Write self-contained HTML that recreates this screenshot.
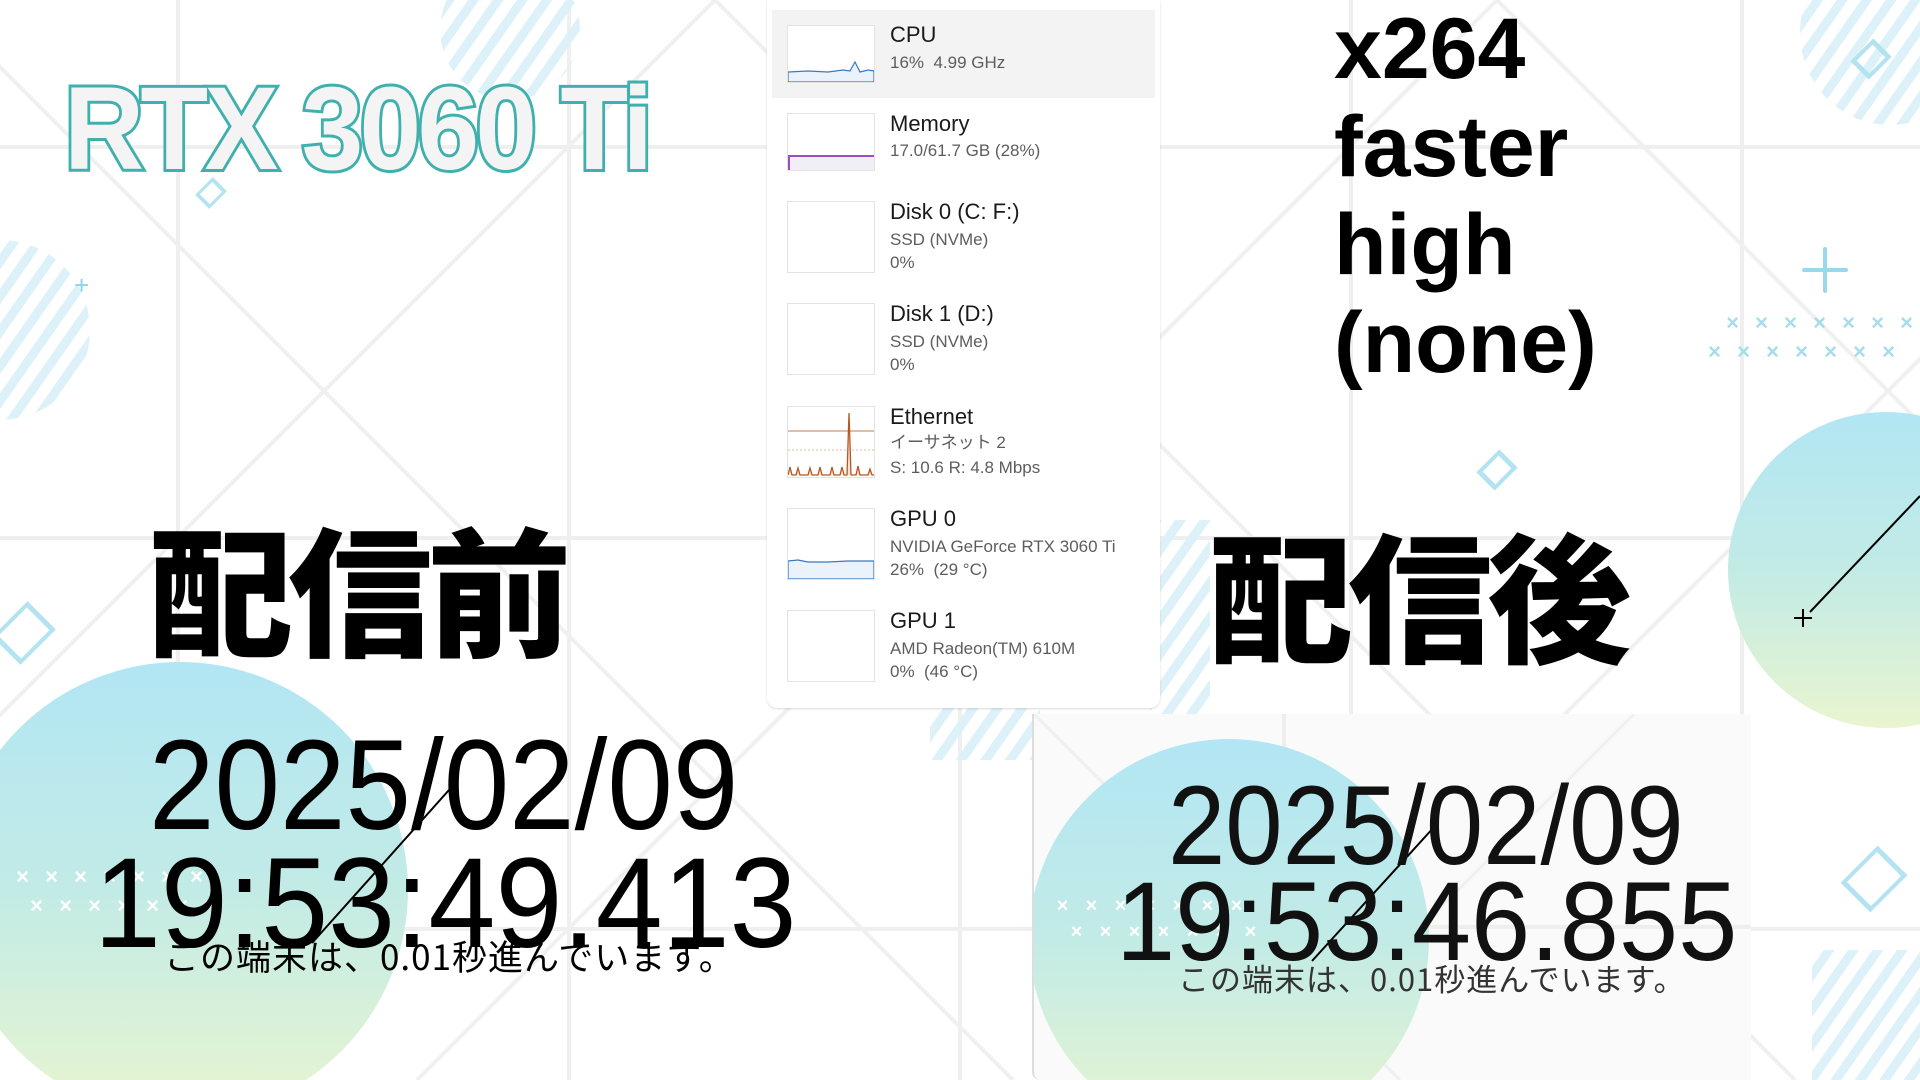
<!DOCTYPE html>
<html><head><meta charset="utf-8"><style>
*{margin:0;padding:0;box-sizing:border-box}
html,body{width:1920px;height:1080px;overflow:hidden;background:#fff}
#root{position:relative;width:1920px;height:1080px;overflow:hidden;font-family:"Liberation Sans","Noto Sans CJK JP",sans-serif}
.a{position:absolute}
.hatch{position:absolute;border-radius:50%;background:repeating-linear-gradient(-55deg,#dcf2f8 0 9px,transparent 9px 20px)}
.dia{position:absolute;border:4px solid #b3e3f0;transform:rotate(45deg) scaleY(1.25)}
.tm{position:absolute;left:767px;top:0;width:393px;height:708px;background:#fff;border-radius:0 0 10px 10px;box-shadow:0 1px 2px rgba(0,0,0,.15)}
.th{position:absolute;left:20px;width:88px;border:1px solid #e3e3e3;background:#fff}
.t1{position:absolute;left:123px;font-size:22px;color:#1a1a1a;white-space:nowrap}
.t2{position:absolute;left:123px;font-size:17px;color:#5d5d5d;white-space:nowrap}
.clk{position:absolute;white-space:nowrap;color:#000;transform-origin:0 0;line-height:1}
.big{position:absolute;font-family:"Noto Sans CJK JP",sans-serif;font-weight:900;font-size:140px;line-height:1;color:#000;letter-spacing:-5px;transform-origin:0 0}
.x264{position:absolute;left:1334px;font-weight:bold;font-size:86px;line-height:1;color:#000}
.xr{position:absolute;display:flex;gap:0;white-space:nowrap;font-weight:bold;line-height:1}
.xr span{width:29px;text-align:center}
</style></head><body><div id="root">
<svg class="a" style="left:0;top:0" width="1920" height="1080">
<g stroke="#efefef" stroke-width="4">
<line x1="178" y1="0" x2="178" y2="1080"/><line x1="569" y1="0" x2="569" y2="1080"/><line x1="960" y1="0" x2="960" y2="1080"/><line x1="1351" y1="0" x2="1351" y2="1080"/><line x1="1742" y1="0" x2="1742" y2="1080"/>
<line x1="0" y1="147" x2="1920" y2="147"/><line x1="0" y1="538" x2="1920" y2="538"/><line x1="0" y1="929" x2="1920" y2="929"/>
</g>
<g stroke="#f0f0f0" stroke-width="4">
<line x1="-67" y1="0" x2="1013" y2="1080"/><line x1="715" y1="0" x2="1795" y2="1080"/><line x1="1497" y1="0" x2="2577" y2="1080"/><line x1="-849" y1="0" x2="231" y2="1080"/>
<line x1="715" y1="0" x2="-365" y2="1080"/><line x1="1497" y1="0" x2="417" y2="1080"/><line x1="2279" y1="0" x2="1199" y2="1080"/><line x1="3061" y1="0" x2="1981" y2="1080"/>
</g>
<defs>
<linearGradient id="g1" x1="0" y1="0" x2="0" y2="1"><stop offset="0" stop-color="#b2e6f4"/><stop offset="0.5" stop-color="#c2ebe6"/><stop offset="1" stop-color="#e9f5cf"/></linearGradient>
</defs>
<circle cx="180" cy="890" r="228" fill="url(#g1)"/>
<circle cx="1886" cy="570" r="158" fill="url(#g1)"/>
</svg>
<div class="hatch" style="left:440px;top:-40px;width:140px;height:140px"></div>
<div class="hatch" style="left:-90px;top:240px;width:180px;height:180px"></div>
<div class="hatch" style="left:1800px;top:-60px;width:180px;height:185px"></div>
<div class="hatch" style="left:1812px;top:950px;width:200px;height:200px;border-radius:0"></div>
<div class="hatch" style="left:1150px;top:520px;width:60px;height:210px;border-radius:0"></div>
<div class="hatch" style="left:930px;top:700px;width:110px;height:60px;border-radius:0"></div>
<div class="dia" style="left:201px;top:183px;width:20px;height:20px;border-width:3px"></div>
<div class="dia" style="left:4px;top:613px;width:40px;height:40px"></div>
<div class="dia" style="left:1484px;top:457px;width:26px;height:26px"></div>
<div class="dia" style="left:1858px;top:46px;width:26px;height:26px"></div>
<div class="dia" style="left:1853px;top:858px;width:42px;height:42px"></div>
<div class="a" style="left:74px;top:272px;color:#8ed3e8;font-size:26px;line-height:1">+</div>
<svg class="a" style="left:1800px;top:245px" width="50" height="50"><path d="M25 4V46M4 25H46" stroke="#9ad8ec" stroke-width="4" stroke-linecap="round"/></svg>
<div class="xr" style="left:1718px;top:312px;color:#a6dcec;font-size:22px"><span>×</span><span>×</span><span>×</span><span>×</span><span>×</span><span>×</span><span>×</span></div>
<div class="xr" style="left:1700px;top:341px;color:#a6dcec;font-size:22px"><span>×</span><span>×</span><span>×</span><span>×</span><span>×</span><span>×</span><span>×</span></div>
<div class="xr" style="left:8px;top:866px;color:#fff;font-size:22px"><span>×</span><span>×</span><span>×</span><span>×</span><span>×</span><span>×</span><span>×</span></div>
<div class="xr" style="left:22px;top:895px;color:#fff;font-size:22px"><span>×</span><span>×</span><span>×</span><span>×</span><span>×</span><span>×</span><span>×</span></div>

<div class="a" style="left:64px;top:70px;font-size:118px;font-weight:bold;color:#f4f4f4;-webkit-text-stroke:6px #3fb0ad;paint-order:stroke fill;letter-spacing:-4px;line-height:1;transform:scaleX(0.94);transform-origin:0 0">RTX 3060 Ti</div>

<div class="tm">
<div class="a" style="left:5px;top:10px;width:383px;height:88px;background:#f3f3f3"></div>
<div class="th" style="top:25px;height:58px"><svg width="86" height="56" style="position:absolute;left:0;top:0"><path d="M0 46 L20 45 L40 46 L55 44 L62 45 L67 36 L72 46 L80 44 L86 45 V56 H0Z" fill="#eaf2fb" stroke="#3b78c4" stroke-width="1.2"/></svg></div>
<div class="t1" style="top:22px">CPU</div><div class="t2" style="top:53px">16%&nbsp; 4.99 GHz</div>
<div class="th" style="top:113px;height:58px"><div class="a" style="left:0;bottom:0;width:86px;height:15px;background:#f1eef5;border-top:2px solid #9a4fc1;border-left:2px solid #9a4fc1"></div></div>
<div class="t1" style="top:111px">Memory</div><div class="t2" style="top:141px">17.0/61.7 GB (28%)</div>
<div class="th" style="top:201px;height:72px"></div>
<div class="t1" style="top:199px">Disk 0 (C: F:)</div><div class="t2" style="top:230px">SSD (NVMe)</div><div class="t2" style="top:253px">0%</div>
<div class="th" style="top:303px;height:72px"></div>
<div class="t1" style="top:301px">Disk 1 (D:)</div><div class="t2" style="top:332px">SSD (NVMe)</div><div class="t2" style="top:355px">0%</div>
<div class="th" style="top:406px;height:72px"><svg width="86" height="70" style="position:absolute;left:0;top:0"><line x1="0" y1="24" x2="86" y2="24" stroke="#d9a98a" stroke-width="1.5"/><line x1="0" y1="43" x2="86" y2="43" stroke="#e6b8a0" stroke-dasharray="2 2"/><path d="M0 68 L2 60 L4 68 L8 68 L10 61 L12 68 L20 68 L22 61 L24 68 L30 68 L32 60 L34 68 L42 68 L44 60 L46 68 L52 68 L54 60 L56 68 L59 68 L61 6 L63 68 L68 68 L70 59 L72 68 L80 68 L82 62 L84 68 L86 68" fill="#f4e3d9" stroke="#b8561f" stroke-width="1.3"/></svg></div>
<div class="t1" style="top:404px">Ethernet</div><div class="t2" style="top:433px;line-height:1.2">イーサネット 2</div><div class="t2" style="top:458px">S: 10.6 R: 4.8 Mbps</div>
<div class="th" style="top:508px;height:72px"><svg width="86" height="70" style="position:absolute;left:0;top:0"><path d="M0 52 L10 51 L20 53 L40 53 L60 52 L86 52 V70 H0Z" fill="#eaf2fb" stroke="#3b78c4" stroke-width="1.2"/></svg></div>
<div class="t1" style="top:506px">GPU 0</div><div class="t2" style="top:537px">NVIDIA GeForce RTX 3060 Ti</div><div class="t2" style="top:560px">26%&nbsp; (29 °C)</div>
<div class="th" style="top:610px;height:72px"></div>
<div class="t1" style="top:608px">GPU 1</div><div class="t2" style="top:639px">AMD Radeon(TM) 610M</div><div class="t2" style="top:662px">0%&nbsp; (46 °C)</div>
</div>

<div class="x264" style="top:6px">x264</div>
<div class="x264" style="top:104px">faster</div>
<div class="x264" style="top:202px">high</div>
<div class="x264" style="top:300px">(none)</div>

<div class="big" style="left:149px;top:516px;transform:scaleX(1.03) scaleY(1.0)">配信前</div>
<div class="big" style="left:1209px;top:522px;transform:scaleX(1.03) scaleY(1.0)">配信後</div>

<div class="clk" style="left:149px;top:722px;font-size:128px;transform:scaleX(0.92)">2025/02/09</div>
<div class="clk" style="left:94px;top:840px;font-size:128px;transform:scaleX(0.94)">19:53:49.413</div>
<div class="clk" style="left:164px;top:938px;font-size:35px;font-family:'Noto Sans CJK JP',sans-serif;letter-spacing:1px">この端末は、0.01秒進んでいます。</div>
<svg class="a" style="left:0;top:0" width="1920" height="1080"><line x1="449" y1="790" x2="312" y2="943" stroke="#000" stroke-width="2"/></svg>

<div class="a" style="left:1032px;top:714px;width:719px;height:366px;background:#fafafa;overflow:hidden;border-left:2px solid #ddd;border-radius:0 0 0 8px">
<svg width="719" height="366" style="position:absolute;left:0;top:0">
<line x1="250" y1="0" x2="250" y2="366" stroke="#eee" stroke-width="4"/><line x1="0" y1="213" x2="719" y2="213" stroke="#eee" stroke-width="4"/>
<line x1="0" y1="0" x2="366" y2="366" stroke="#f0f0f0" stroke-width="3"/><line x1="600" y1="0" x2="234" y2="366" stroke="#f0f0f0" stroke-width="3"/>
<circle cx="195" cy="225" r="200" fill="url(#g1)"/>
<line x1="401" y1="112" x2="278" y2="247" stroke="#000" stroke-width="2"/>
</svg>
<div class="xr" style="left:14px;top:182px;color:#fff;font-size:20px"><span>×</span><span>×</span><span>×</span><span>×</span><span>×</span><span>×</span><span>×</span></div>
<div class="xr" style="left:28px;top:208px;color:#fff;font-size:20px"><span>×</span><span>×</span><span>×</span><span>×</span><span>×</span><span>×</span><span>×</span></div>
<div class="clk" style="left:134px;top:56px;font-size:112px;transform:scaleX(0.92);color:#111">2025/02/09</div>
<div class="clk" style="left:82px;top:152px;font-size:112px;transform:scaleX(0.95);color:#111">19:53:46.855</div>
<div class="clk" style="left:144px;top:248px;font-size:31px;font-family:'Noto Sans CJK JP',sans-serif;letter-spacing:1px;color:#333">この端末は、0.01秒進んでいます。</div>
</div>
<svg class="a" style="left:0;top:0" width="1920" height="1080"><line x1="1920" y1="496" x2="1810" y2="612" stroke="#000" stroke-width="2"/><path d="M1803 609V627M1794 618H1812" stroke="#000" stroke-width="2"/></svg>
</div></body></html>
